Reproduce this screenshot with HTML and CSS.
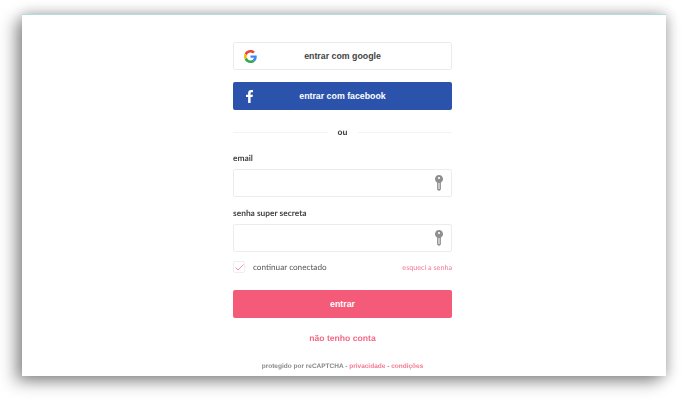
FILE: index.html
```html
<!DOCTYPE html>
<html lang="pt">
<head>
    <meta charset="UTF-8">
    <meta name="viewport" content="width=device-width, initial-scale=1.0">
    <title>Entrar</title>
    <link rel="stylesheet" href="styles.css">
</head>
<body>
    <main class="card">
        <form class="login">
            <button type="button" class="btn btn-google">
                <svg class="btn-icon" width="13" height="13" viewBox="0 0 48 48">
                    <path fill="#EA4335" d="M24 9.500c3.500 0 6.700 1.200 9.200 3.600l6.900-6.900C35.900 2.400 30.500 0 24 0 14.600 0 6.500 5.400 2.600 13.200l8 6.200C12.500 13.700 17.800 9.500 24 9.500z"/>
                    <path fill="#4285F4" d="M47 24.500c0-1.600-.1-3.100-.4-4.500H24v9h13c-.6 3-2.300 5.500-4.800 7.200l7.700 6C44.400 38 47 31.800 47 24.500z"/>
                    <path fill="#FBBC05" d="M10.600 28.600c-.5-1.400-.8-3-.8-4.600s.3-3.200.8-4.600l-8-6.200C.9 16.500 0 20.100 0 24s.9 7.500 2.600 10.800l8-6.200z"/>
                    <path fill="#34A853" d="M24 48c6.500 0 11.900-2.100 15.900-5.800l-7.700-6c-2.200 1.400-4.900 2.300-8.200 2.300-6.200 0-11.500-4.200-13.400-9.900l-8 6.200C6.500 42.600 14.600 48 24 48z"/>
                </svg>
                entrar com google
            </button>
            <button type="button" class="btn btn-facebook">
                <svg class="btn-icon" width="7" height="13" viewBox="0 0 7 13">
                    <path fill="#fff" d="M4.600 13V7.100h2l.3-2.300H4.600V3.300c0-.7.200-1.100 1.100-1.100H7V.1C6.800.1 6 0 5.100 0 3.300 0 2.100 1.100 2.100 3.100v1.700H0v2.300h2.100V13z"/>
                </svg>
                entrar com facebook
            </button>

            <div class="divider"><span>ou</span></div>

            <label class="field-label" for="email">email</label>
            <div class="field">
                <input type="text" id="email">
                <svg class="key" width="8" height="16" viewBox="0 0 8 16">
                    <path fill="#8f8f8f" d="M4 0a4 4 0 0 1 1.900 7.500V14.500L4 16 2.100 14.500V7.500A4 4 0 0 1 4 0z"/>
                    <circle cx="4" cy="3" r="1.100" fill="#fff"/>
                    <rect x="3.500" y="8" width="1" height="6" fill="#fff"/>
                </svg>
            </div>

            <label class="field-label" for="senha">senha super secreta</label>
            <div class="field">
                <input type="password" id="senha">
                <svg class="key" width="8" height="16" viewBox="0 0 8 16">
                    <path fill="#8f8f8f" d="M4 0a4 4 0 0 1 1.900 7.500V14.500L4 16 2.100 14.500V7.500A4 4 0 0 1 4 0z"/>
                    <circle cx="4" cy="3" r="1.100" fill="#fff"/>
                    <rect x="3.500" y="8" width="1" height="6" fill="#fff"/>
                </svg>
            </div>

            <div class="options">
                <label class="remember">
                    <span class="check">
                        <svg width="9" height="7" viewBox="0 0 9 7"><path fill="none" stroke="#f7909f" stroke-width="1" d="M.5 3.500 3 6 8.500.5"/></svg>
                    </span>
                    continuar conectado
                </label>
                <a href="#" class="forgot">esqueci a senha</a>
            </div>

            <button type="submit" class="btn btn-submit">entrar</button>

            <a href="#" class="no-account">não tenho conta</a>

            <p class="recaptcha">protegido por reCAPTCHA - <a href="#">privacidade</a> - <a href="#">condições</a></p>
        </form>
    </main>
</body>
</html>
```

FILE: styles.css
```css
* {
    box-sizing: border-box;
}

html, body {
    height: 100%;
}

body {
    margin: 0;
    padding: 14px 34px 24px 22px;
    background-color: #fff;
    font-family: "Liberation Sans", Arial, sans-serif;
    text-rendering: geometricPrecision;
    overflow: hidden;
}

.card {
    height: 362px;
    background: #fff;
    border-top: 1px solid #b5dcdc;
    box-shadow: -7px 6px 15px rgba(0,0,0,0.38), 4px 2px 12px rgba(0,0,0,0.14), 0 -3px 12px rgba(0,0,0,0.12);
    padding: 27px 0 0 211px;
    display: flex;
}

.login {
    width: 219px;
    display: flex;
    flex-direction: column;
    filter: blur(0.35px);
}

.btn {
    position: relative;
    width: 100%;
    height: 28px;
    border: none;
    border-radius: 2px;
    font-family: inherit;
    font-size: 8.800px;
    font-weight: 700;
    flex-shrink: 0;
}

.btn-icon {
    position: absolute;
    left: 10px;
    top: 7px;
}

.btn-google {
    background: #fff;
    border: 1px solid #ececec;
    color: #444;
}

.btn-facebook {
    margin-top: 12px;
    background-color: #2b53ac;
    color: #fff;
}

.btn-facebook .btn-icon {
    left: 13px;
    top: 8px;
}

.divider {
    margin-top: 16px;
    height: 12px;
    display: flex;
    align-items: center;
    gap: 10px;
    font-size: 8.200px;
    font-weight: 700;
    color: #444;
}

.divider::before,
.divider::after {
    content: "";
    flex: 1;
    border-top: 1px solid #f3f3f3;
}

.field-label {
    margin-top: 10px;
    height: 12px;
    line-height: 12px;
    font-family: "Lato", sans-serif;
    font-size: 8.400px;
    font-weight: 700;
    color: #444;
}

.divider + .field-label {
    margin-top: 14px;
}

.field {
    position: relative;
    margin-top: 5px;
    height: 28px;
}

.field input {
    display: block;
    width: 100%;
    height: 100%;
    border: 1px solid #ececec;
    border-radius: 2px;
    background: #fff;
    outline: none;
}

.key {
    position: absolute;
    right: 9px;
    top: 6px;
}

.options {
    margin-top: 9px;
    height: 12px;
    display: flex;
    justify-content: space-between;
    align-items: center;
}

.remember {
    display: flex;
    align-items: center;
    gap: 8px;
    font-family: "Lato", sans-serif;
    font-size: 8.200px;
    color: #555;
}

.check {
    width: 12px;
    height: 12px;
    border: 1px solid #eee;
    border-radius: 2px;
    display: flex;
    align-items: center;
    justify-content: center;
}

.forgot {
    font-family: "Lato", sans-serif;
    font-size: 7.200px;
    color: #f57a92;
    text-decoration: none;
}

.btn-submit {
    margin-top: 17px;
    background-color: #f35b79;
    color: #fff;
}

.no-account {
    margin-top: 14px;
    text-align: center;
    font-size: 8.600px;
    line-height: 12px;
    font-weight: 700;
    color: #f46a85;
    text-decoration: none;
}

.recaptcha {
    margin: 18px 0 0;
    text-align: center;
    font-size: 6.500px;
    line-height: 10px;
    font-weight: 700;
    color: #888;
    white-space: nowrap;
}

.recaptcha a {
    color: #f57a92;
    text-decoration: none;
}
```
